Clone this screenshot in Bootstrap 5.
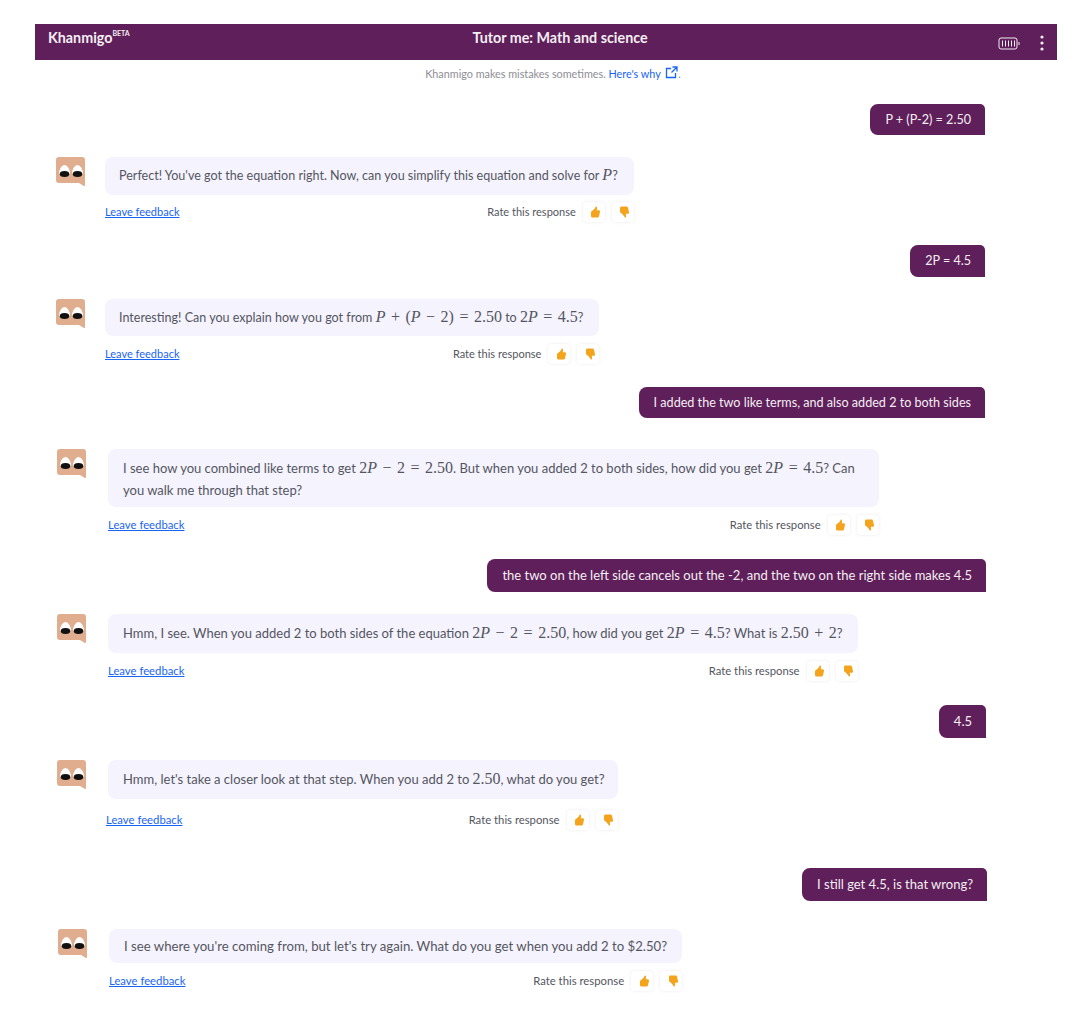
<!DOCTYPE html>
<html lang="en">
<head>
    <meta charset="UTF-8">
    <title>Khanmigo - Tutor me: Math and science</title>
    <link href="https://cdn.jsdelivr.net/npm/bootstrap@5.3.3/dist/css/bootstrap.min.css" rel="stylesheet">
    <script src="https://cdn.jsdelivr.net/npm/bootstrap@5.3.3/dist/js/bootstrap.bundle.min.js"></script>
    <style>
        body { font-family: Lato, "Liberation Sans", sans-serif; background: #fff; color: #54565f; }
        .chat-page { padding: 24px 23px 0 35px; height: 1022px; overflow: hidden; }
        .chat-head { background: #5f1f5a; color: #f4eef3; height: 36px; padding: 0 13px 8px 13px; font-size: 14.3px; font-weight: 700; }
        .chat-head sup { font-size: 7px; top: -1.1em; font-weight: 700; }
        .side-l { width: 126px; }
        .side-r { width: 98px; padding-top: 10px; gap: 20px; }
        .disclaimer { font-size: 10.8px; color: #8d8e95; height: 14px; line-height: 14px; margin-top: 6px; padding-left: 14px; }
        .disclaimer a { color: #1865f2; text-decoration: none; }
        .disclaimer svg { margin-left: 2px; vertical-align: -1px; }
        .user-row { display: flex; justify-content: flex-end; margin-top: 24px; }
        .user-msg { background: #5f1f5a; color: #f4eef3; font-size: 12.6px; line-height: 15px; padding: 8px 14px 8px 15px; border-radius: 8px 5px 0 8px; }
        .h-32 { padding-bottom: 9px; }
        .tall { font-size: 13px; padding-top: 9px; padding-bottom: 9px; }
        .bot-row { display: flex; align-items: flex-start; }
        .bot-face { width: 29px; height: 29px; flex: none; }
        .bot-col { display: inline-flex; flex-direction: column; }
        .bot-msg { background: #f5f3fe; font-size: 12.55px; line-height: 22px; padding: 8px 16px 8px 14px; border-radius: 8px; white-space: nowrap; }
        .bot-foot { font-size: 11px; line-height: 14px; }
        .bot-foot a { color: #1865f2; }
        .rate-box { gap: 7px; }
        .big-text .bot-msg { font-size: 13px; padding-left: 15px; padding-right: 15px; }
        .big-text .bot-foot { font-size: 11.3px; }
        .big-text .slim-msg { font-size: 13.2px; padding-top: 6px; padding-bottom: 6px; }
        .big-text .wide-msg { padding-top: 8px; padding-right: 24px; padding-bottom: 6px; }
        .big-text .tight-msg { padding-right: 13px; padding-bottom: 9px; }
        .rate-btn { width: 22px; height: 20px; padding-left: 3px; background: #fff; border-radius: 4px; box-shadow: 0 0 3px rgba(33, 36, 44, .1); }
        .math { font-family: "Liberation Serif", serif; font-size: 16px; line-height: 1; word-spacing: 1.5px; }
        .h-37 { padding-bottom: 7px; }
        .big-text .h-39 { padding-bottom: 9px; }

        .sp-22 { margin-top: 22px; }
        .sp-23 { margin-top: 23px; }
        .sp-24 { margin-top: 24px; }
        .sp-28 { margin-top: 28px; }
        .sp-31 { margin-top: 31px; }
        .sp-38 { margin-top: 38px; }
        .ft-7 { margin-top: 7px; }
        .ft-8 { margin-top: 8px; }
        .ft-11 { margin-top: 11px; }
        .ft-out { margin-left: -2px; }
        .me-72 { margin-right: 72px; }
        .me-71 { margin-right: 71px; }
        .me-70 { margin-right: 70px; }
        .ms-21 { margin-left: 21px; }
        .ms-22 { margin-left: 22px; }
        .ms-23 { margin-left: 23px; }
        .face-gap { width: 20px; flex: none; }
        .big-text .face-gap { width: 22px; }
    </style>
</head>
<body>
<svg class="d-none">
    <symbol id="face" viewBox="0 0 29 29"><path d="M3 0h23a3 3 0 0 1 3 3v25a1 1 0 0 1-1.500.8L23 26H3a3 3 0 0 1-3-3V3a3 3 0 0 1 3-3z" fill="#e0ad8e"/><path d="M3 17a5.500 9 0 0 1 11 0zM16 17a5.500 9 0 0 1 11 0z" fill="#fff"/><ellipse cx="8.500" cy="17" rx="4.800" ry="3" fill="#111"/><ellipse cx="21.500" cy="17" rx="4.800" ry="3" fill="#111"/></symbol>
    <symbol id="up" viewBox="0 0 12 12"><path fill="#f3a41c" d="M6.800.5c.9 0 1.400.7 1.300 1.600L7.800 4.200h2c.9 0 1.400.8 1.200 1.600l-1 4.500c-.2.8-.8 1.200-1.600 1.200H3.600c-1 0-1.600-.6-1.600-1.500V6.500c0-.5.2-.9.6-1.200C4.500 4 6 2.500 6.800.5z"/></symbol>
    <symbol id="down" viewBox="0 0 12 12"><path fill="#f3a41c" d="M6.800 11.500c.9 0 1.400-.7 1.300-1.600L7.800 7.800h2c.9 0 1.400-.8 1.200-1.600l-1-4.500C9.800.9 9.200.5 8.400.5H3.600C2.600.5 2 1.100 2 2v3.500c0 .5.2.9.6 1.200C4.500 8 6 9.500 6.800 11.500z"/></symbol>
</svg>
<div class="chat-page">
    <div class="chat-head d-flex align-items-center justify-content-between">
        <div class="side-l">Khanmigo<sup>BETA</sup></div>
        <div>Tutor me: Math and science</div>
        <div class="side-r d-flex align-items-center justify-content-end">
            <svg width="22" height="13" viewBox="0 0 22 13" fill="none" stroke="#f4eef3"><rect x="1" y="1" width="18" height="11" rx="2"/><path d="M4.500 3.500v6M7.500 3.500v6M10.500 3.500v6M13.500 3.500v6M16.500 3.500v6M21 5v3"/></svg>
            <svg width="4" height="16" viewBox="0 0 4 16" fill="#f4eef3"><circle cx="2" cy="2" r="1.600"/><circle cx="2" cy="8" r="1.600"/><circle cx="2" cy="14" r="1.600"/></svg>
        </div>
    </div>
    <div class="disclaimer text-center">Khanmigo makes mistakes sometimes. <a href="#">Here's why <svg width="13" height="13" viewBox="0 0 13 13" fill="none" stroke="#1865f2" stroke-width="1.300"><path d="M6 2.500H1.500v9h9V7M7.500 1H12v4.500M12 1 6.500 6.500"/></svg></a>.</div>

    <div class="user-row me-72"><div class="user-msg">P + (P-2) = 2.50</div></div>

    <div class="bot-row ms-21 sp-22">
        <svg class="bot-face"><use href="#face"/></svg>
        <div class="face-gap"></div>
        <div class="bot-col">
            <div class="bot-msg">Perfect! You've got the equation right. Now, can you simplify this equation and solve for <span class="math"><i>P</i></span>?</div>
            <div class="bot-foot ft-7 d-flex align-items-center justify-content-between">
                <a href="#">Leave feedback</a>
                <div class="rate-box d-flex align-items-center"><span>Rate this response</span>
                    <span class="rate-btn d-flex align-items-center justify-content-center"><svg width="12" height="12"><use href="#up"/></svg></span>
                    <span class="rate-btn d-flex align-items-center justify-content-center"><svg width="12" height="12"><use href="#down"/></svg></span>
                </div>
            </div>
        </div>
    </div>

    <div class="user-row me-72 sp-23"><div class="user-msg h-32">2P = 4.5</div></div>

    <div class="bot-row ms-21 sp-22">
        <svg class="bot-face"><use href="#face"/></svg>
        <div class="face-gap"></div>
        <div class="bot-col">
            <div class="bot-msg h-37">Interesting! Can you explain how you got from <span class="math"><i>P</i> + (<i>P</i> − 2) = 2.50</span> to <span class="math">2<i>P</i> = 4.5</span>?</div>
            <div class="bot-foot ft-8 d-flex align-items-center justify-content-between">
                <a href="#">Leave feedback</a>
                <div class="rate-box d-flex align-items-center"><span>Rate this response</span>
                    <span class="rate-btn d-flex align-items-center justify-content-center"><svg width="12" height="12"><use href="#up"/></svg></span>
                    <span class="rate-btn d-flex align-items-center justify-content-center"><svg width="12" height="12"><use href="#down"/></svg></span>
                </div>
            </div>
        </div>
    </div>

    <div class="user-row me-72 sp-23"><div class="user-msg">I added the two like terms, and also added 2 to both sides</div></div>

    <div class="bot-row big-text ms-22 sp-31">
        <svg class="bot-face"><use href="#face"/></svg>
        <div class="face-gap"></div>
        <div class="bot-col">
            <div class="bot-msg wide-msg">I see how you combined like terms to get <span class="math">2<i>P</i> − 2 = 2.50</span>. But when you added 2 to both sides, how did you get <span class="math">2<i>P</i> = 4.5</span>? Can<br>you walk me through that step?</div>
            <div class="bot-foot ft-8 d-flex align-items-center justify-content-between">
                <a href="#">Leave feedback</a>
                <div class="rate-box d-flex align-items-center"><span>Rate this response</span>
                    <span class="rate-btn d-flex align-items-center justify-content-center"><svg width="12" height="12"><use href="#up"/></svg></span>
                    <span class="rate-btn d-flex align-items-center justify-content-center"><svg width="12" height="12"><use href="#down"/></svg></span>
                </div>
            </div>
        </div>
    </div>

    <div class="user-row me-71 sp-24"><div class="user-msg tall">the two on the left side cancels out the -2, and the two on the right side makes 4.5</div></div>

    <div class="bot-row big-text ms-22 sp-22">
        <svg class="bot-face"><use href="#face"/></svg>
        <div class="face-gap"></div>
        <div class="bot-col">
            <div class="bot-msg h-39">Hmm, I see. When you added 2 to both sides of the equation <span class="math">2<i>P</i> − 2 = 2.50</span>, how did you get <span class="math">2<i>P</i> = 4.5</span>? What is <span class="math">2.50 + 2</span>?</div>
            <div class="bot-foot ft-8 d-flex align-items-center justify-content-between">
                <a href="#">Leave feedback</a>
                <div class="rate-box d-flex align-items-center"><span>Rate this response</span>
                    <span class="rate-btn d-flex align-items-center justify-content-center"><svg width="12" height="12"><use href="#up"/></svg></span>
                    <span class="rate-btn d-flex align-items-center justify-content-center"><svg width="12" height="12"><use href="#down"/></svg></span>
                </div>
            </div>
        </div>
    </div>

    <div class="user-row me-71 sp-24"><div class="user-msg tall">4.5</div></div>

    <div class="bot-row big-text ms-22 sp-22">
        <svg class="bot-face"><use href="#face"/></svg>
        <div class="face-gap"></div>
        <div class="bot-col">
            <div class="bot-msg tight-msg">Hmm, let's take a closer look at that step. When you add 2 to <span class="math">2.50</span>, what do you get?</div>
            <div class="bot-foot ft-11 ft-out d-flex align-items-center justify-content-between">
                <a href="#">Leave feedback</a>
                <div class="rate-box d-flex align-items-center"><span>Rate this response</span>
                    <span class="rate-btn d-flex align-items-center justify-content-center"><svg width="12" height="12"><use href="#up"/></svg></span>
                    <span class="rate-btn d-flex align-items-center justify-content-center"><svg width="12" height="12"><use href="#down"/></svg></span>
                </div>
            </div>
        </div>
    </div>

    <div class="user-row me-70 sp-38"><div class="user-msg tall">I still get 4.5, is that wrong?</div></div>

    <div class="bot-row big-text ms-23 sp-28">
        <svg class="bot-face"><use href="#face"/></svg>
        <div class="face-gap"></div>
        <div class="bot-col">
            <div class="bot-msg slim-msg">I see where you're coming from, but let's try again. What do you get when you add 2 to $2.50?</div>
            <div class="bot-foot ft-8 d-flex align-items-center justify-content-between">
                <a href="#">Leave feedback</a>
                <div class="rate-box d-flex align-items-center"><span>Rate this response</span>
                    <span class="rate-btn d-flex align-items-center justify-content-center"><svg width="12" height="12"><use href="#up"/></svg></span>
                    <span class="rate-btn d-flex align-items-center justify-content-center"><svg width="12" height="12"><use href="#down"/></svg></span>
                </div>
            </div>
        </div>
    </div>
</div>
</body>
</html>
